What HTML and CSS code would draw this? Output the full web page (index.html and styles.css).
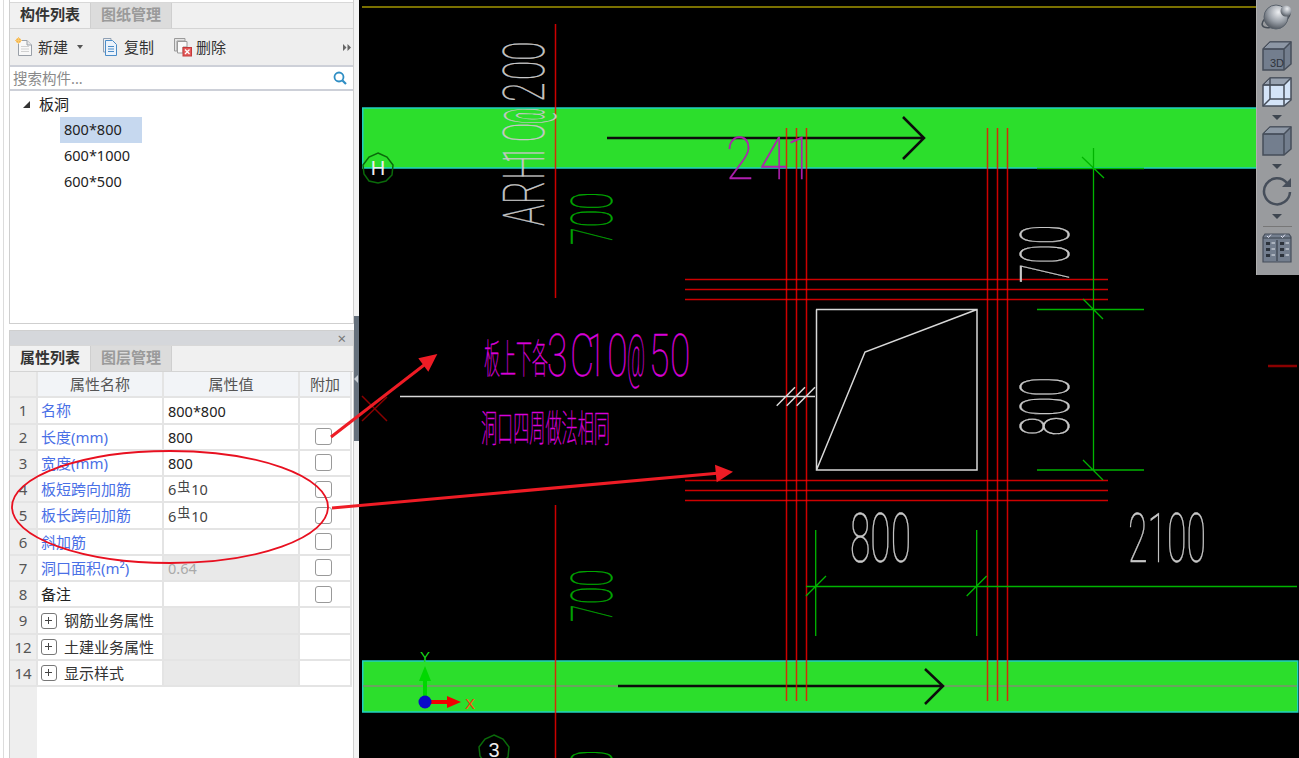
FILE: index.html
```html
<!DOCTYPE html>
<html lang="zh-CN">
<head>
<meta charset="utf-8">
<title>构件列表</title>
<link rel="stylesheet" href="styles.css">
</head>
<body>
<div class="sidebar">
  <div class="panels">
    <section class="panel panel-top">
      <div class="tabs">
        <div class="tab active">构件列表</div>
        <div class="tab">图纸管理</div>
      </div>
      <div class="tools">
        <div class="tool tool-new">
          <svg width="20" height="20" viewBox="0 0 20 20"><path d="M3.500 3.500H12L16.500 8V18.500H3.500Z" fill="#f8f8f8" stroke="#9aa0a8"/><path d="M12 3.500V8H16.500" fill="#e8e8e8" stroke="#9aa0a8"/><path d="M6 9.500H14M6 12H14M6 14.500H14" stroke="#d0d0d0"/><circle cx="3.500" cy="3.500" r="2.500" fill="#f5b342"/><path d="M3.500 0V7M0 3.500H7" stroke="#f9c870"/></svg>
          <span>新建</span><i class="caret"></i>
        </div>
        <div class="tool tool-copy">
          <svg width="16" height="20" viewBox="0 0 16 20"><path d="M1.500 1.500H9V3" fill="none" stroke="#8fa0b4"/><path d="M1.500 1.500V15H3" fill="none" stroke="#8fa0b4"/><path d="M3.500 3.500H10.500L14.500 7.500V18.500H3.500Z" fill="#eaf2fb" stroke="#4a8cc8"/><path d="M6 9.500H12M6 12H12M6 14.500H12" stroke="#4a8cc8"/></svg>
          <span>复制</span>
        </div>
        <div class="tool tool-del">
          <svg width="20" height="20" viewBox="0 0 20 20"><path d="M1.500 1.500H12V4H4V14H1.500Z" fill="#e4e4e4" stroke="#9a9a9a"/><path d="M4.500 4.500H14V10H10V16H4.500Z" fill="#fafafa" stroke="#9a9a9a"/><rect x="10" y="10.500" width="8.500" height="8.500" fill="#e45a5a" stroke="#c43a3a"/><path d="M12 12.500L16.500 17M16.500 12.500L12 17" stroke="#fff" stroke-width="1.300"/></svg>
          <span>删除</span>
        </div>
        <svg class="more" width="8" height="7" viewBox="0 0 8 7"><path d="M0 0L3.500 3.500L0 7ZM4.500 0L8 3.500L4.500 7Z" fill="#666"/></svg>
      </div>
      <div class="search">
        <span class="search-text">搜索构件...</span>
        <svg width="14" height="14" viewBox="0 0 14 14"><circle cx="6" cy="6" r="4.500" fill="none" stroke="#2f8ec4" stroke-width="1.800"/><path d="M9.500 9.500L13 13" stroke="#2f8ec4" stroke-width="2.200"/></svg>
      </div>
      <div class="tree">
        <div class="tree-root"><i class="tree-arrow"></i><span>板洞</span></div>
        <div class="tree-item selected">800*800</div>
        <div class="tree-item">600*1000</div>
        <div class="tree-item">600*500</div>
      </div>
    </section>

    <section class="panel panel-bottom">
      <div class="panel-head"><span class="close">×</span></div>
      <div class="tabs">
        <div class="tab active">属性列表</div>
        <div class="tab">图层管理</div>
      </div>
      <div class="grid">
        <div class="c idx"></div><div class="c hd">属性名称</div><div class="c hd">属性值</div><div class="c hd">附加</div>

        <div class="c idx">1</div><div class="c name">名称</div><div class="c val">800*800</div><div class="c chk"></div>
        <div class="c idx">2</div><div class="c name">长度(mm)</div><div class="c val">800</div><div class="c chk"><i class="box"></i></div>
        <div class="c idx">3</div><div class="c name">宽度(mm)</div><div class="c val">800</div><div class="c chk"><i class="box"></i></div>
        <div class="c idx">4</div><div class="c name">板短跨向加筋</div><div class="c val rebar">6<span class="bar">虫</span>10</div><div class="c chk"><i class="box"></i></div>
        <div class="c idx">5</div><div class="c name">板长跨向加筋</div><div class="c val rebar">6<span class="bar">虫</span>10</div><div class="c chk"><i class="box"></i></div>
        <div class="c idx">6</div><div class="c name">斜加筋</div><div class="c val"></div><div class="c chk"><i class="box"></i></div>
        <div class="c idx">7</div><div class="c name">洞口面积(m²)</div><div class="c val off">0.64</div><div class="c chk"><i class="box"></i></div>
        <div class="c idx">8</div><div class="c plain">备注</div><div class="c val"></div><div class="c chk"><i class="box"></i></div>
        <div class="c idx">9</div><div class="c group"><i class="plus"></i>钢筋业务属性</div><div class="c val off"></div><div class="c chk"></div>
        <div class="c idx">12</div><div class="c group"><i class="plus"></i>土建业务属性</div><div class="c val off"></div><div class="c chk"></div>
        <div class="c idx">14</div><div class="c group"><i class="plus"></i>显示样式</div><div class="c val off"></div><div class="c chk"></div>
      </div>
      <div class="grid-rest"></div>
    </section>
  </div>
  <div class="splitter"><div class="splitter-bar"><i></i></div></div>
</div>

<main class="canvas">
  <svg class="drawing" viewBox="359 0 940 758" width="940" height="758">
    <path class="olive" d="M362 7H1299"/>

    <rect class="band" x="362.750" y="108" width="937" height="60"/>
    <rect class="band" x="362.750" y="661" width="935" height="51"/>
    <path class="axis-line" d="M363 686H1297"/>

    <path class="beam-arrow" d="M607 138H924M903 117L924 138L903 159"/>
    <path class="beam-arrow" d="M618 686H943M925 669L943 686L925 704"/>

    <path class="red" d="M555.500 24V298M555.500 505V758"/>
    <path class="red" d="M786.500 128V701M796.500 128V701M806.500 128V701M987.500 128V701M997.500 128V701M1007.500 128V701"/>
    <path class="red" d="M685 279.500H1108M685 289.500H1108M685 299.500H1108M685 480.500H1108M685 490.500H1108M685 500.500H1108"/>
    <path class="dark-red" d="M1268 366H1297"/>
    <path class="dark-red thin" d="M362 396L387 421M387 397L362 421"/>

    <path class="white" d="M816 309.500H977V470H816.500V309.500M816.500 470L865 352L977 309.500"/>
    <path class="white" d="M400 396.500H815M776.700 405.700L795 387.300M786.700 405.700L805 387.300M796.700 405.700L815 387.300"/>

    <path class="dim" d="M1093.500 148V470M1037 168.500H1144M1037 309.500H1144M1037 470H1144M1082 157L1104 178M1083 299L1103 319M1083 460L1103 480"/>
    <path class="dim" d="M806 586.500H1297M815.700 530V636M976.700 530V636M806 596L826 576M966.700 596L986.700 576"/>

    <text class="cad grey" transform="translate(544 226) rotate(-90) scale(0.620 1)" font-size="58" x="0 35 74 100 135">ARH10</text>
    <text class="cad grey" transform="translate(544 124) rotate(-90)" font-size="58" textLength="16" lengthAdjust="spacingAndGlyphs">@</text>
    <text class="cad grey" transform="translate(544 102) rotate(-90) scale(0.620 1)" font-size="58" x="0 35 66">200</text>
    <text class="cad green" transform="translate(612 245) rotate(-90)" font-size="58" textLength="53" lengthAdjust="spacingAndGlyphs">700</text>
    <text class="cad green" transform="translate(612 622) rotate(-90)" font-size="58" textLength="53" lengthAdjust="spacingAndGlyphs">700</text>
    <text class="cad green" transform="translate(612 803) rotate(-90)" font-size="58" textLength="53" lengthAdjust="spacingAndGlyphs">700</text>
    <text class="cad grey" transform="translate(1069 283) rotate(-90)" font-size="69" textLength="58" lengthAdjust="spacingAndGlyphs">700</text>
    <text class="cad grey" transform="translate(1069 436) rotate(-90)" font-size="69" textLength="59" lengthAdjust="spacingAndGlyphs">800</text>
    <text class="cad grey" x="850" y="562" font-size="69" textLength="61" lengthAdjust="spacingAndGlyphs">800</text>
    <text class="cad grey" x="1128" y="562" font-size="69" textLength="78" lengthAdjust="spacingAndGlyphs">2100</text>
    <text class="cad plum" transform="translate(726 179) scale(0.850 1)" font-size="59" x="0 39 71">241</text>
    <text class="cad-cjk magenta" x="484" y="373" font-size="40" textLength="64" lengthAdjust="spacingAndGlyphs">板上下各</text>
    <text class="cad magenta" transform="translate(547 376) scale(0.620 1)" font-size="60" x="0 37 63 97">3C10</text>
    <text class="cad magenta" x="627" y="376" font-size="60" textLength="18" lengthAdjust="spacingAndGlyphs">@</text>
    <text class="cad magenta" transform="translate(649 376) scale(0.620 1)" font-size="60" x="0 34">50</text>
    <text class="cad-cjk magenta" x="481" y="442" font-size="37" textLength="129" lengthAdjust="spacingAndGlyphs">洞口四周做法相同</text>

    <polygon class="marker" points="378,153 387,157 393,165 392,175 386,181 378,183 369,181 364,174 363,165 369,157"/>
    <text class="marker-label" x="378" y="175" font-size="20">H</text>
    <polygon class="marker" points="494,735 503,739 509,747 508,757 502,763 494,765 485,763 480,756 479,747 485,739"/>
    <text class="marker-label" x="494" y="757" font-size="20">3</text>

    <path class="axis-y" d="M425 702V680"/><path class="axis-y-head" d="M425 666L431 681H419Z"/>
    <path class="axis-x" d="M425 702H449"/><path class="axis-x-head" d="M461 702L447 696V708Z"/>
    <circle class="axis-o" cx="425" cy="702" r="6.500"/>
    <text class="axis-label-y" x="425" y="662" font-size="15">Y</text>
    <text class="axis-label-x" x="470" y="709" font-size="15">X</text>
  </svg>

  <nav class="view-tools">
    <svg class="vt-orbit" width="32" height="30" viewBox="0 0 32 30"><defs><radialGradient id="ball" cx="0.600" cy="0.300" r="0.750"><stop offset="0" stop-color="#eceef1"/><stop offset="0.550" stop-color="#9aa0a8"/><stop offset="1" stop-color="#4a5058"/></radialGradient></defs><ellipse cx="15" cy="17" rx="15" ry="6.500" transform="rotate(-25 15 17)" fill="none" stroke="#454c55" stroke-width="1.500"/><circle cx="15" cy="15" r="12" fill="url(#ball)" stroke="#5a626c"/><circle cx="25" cy="9" r="5.500" fill="url(#ball)"/></svg>
    <svg class="vt-box" width="30" height="30" viewBox="0 0 30 30"><path d="M1 8L8 1H29V23L22 29H1Z" fill="#737e8e" stroke="#464e5a" stroke-width="1.500"/><path d="M1 8L8 1H29L22 8Z" fill="#8d97a5" stroke="#464e5a"/><path d="M1 8H22V29M22 8L29 1" fill="none" stroke="#464e5a" stroke-width="1.500"/><text class="vt-3d" x="8" y="26" font-size="11">3D</text></svg>
    <svg class="vt-wire" width="30" height="30" viewBox="0 0 30 30"><path d="M1 8L8 1H29V23L22 29H1Z" fill="#d4e4f8" stroke="#464e5a" stroke-width="1.500"/><path d="M1 8L8 1H29L22 8Z" fill="#98a2b0" stroke="#464e5a"/><path d="M1 8H22V29M22 8L29 1M8 1V22H29M8 22L1 29" fill="none" stroke="#464e5a" stroke-width="1.500"/></svg>
    <svg class="vt-caret" width="10" height="5" viewBox="0 0 10 5"><path d="M0 0H10L5 5Z" fill="#3e4650"/></svg>
    <svg class="vt-solid" width="30" height="30" viewBox="0 0 30 30"><path d="M1 8L8 1H29V23L22 29H1Z" fill="#737e8e" stroke="#464e5a" stroke-width="1.500"/><path d="M1 8L8 1H29L22 8Z" fill="#8d97a5" stroke="#464e5a"/><path d="M1 8H22V29M22 8L29 1" fill="none" stroke="#464e5a" stroke-width="1.500"/></svg>
    <svg class="vt-caret" width="10" height="5" viewBox="0 0 10 5"><path d="M0 0H10L5 5Z" fill="#3e4650"/></svg>
    <svg class="vt-rotate" width="30" height="30" viewBox="0 0 30 30"><path d="M25 7A13 13 0 1 0 28 16" fill="none" stroke="#464e5a" stroke-width="2.500"/><path d="M29 2V11H20Z" fill="#464e5a"/></svg>
    <svg class="vt-caret" width="10" height="5" viewBox="0 0 10 5"><path d="M0 0H10L5 5Z" fill="#3e4650"/></svg>
    <div class="vt-sep"></div>
    <svg class="vt-grid" width="30" height="30" viewBox="0 0 30 30"><path d="M1 4L3 1H27L29 4V29H1Z" fill="#737e8e" stroke="#464e5a" stroke-width="1.200"/><path d="M1 5H29M15 7V28" stroke="#3a424c" stroke-width="1.200"/><path d="M5 3L6.500 4.500L9 1.500M19 3L20.500 4.500L23 1.500" fill="none" stroke="#eef" stroke-width="0.900"/><path d="M4 9H8V12H4ZM4 15H8V18H4ZM4 21H8V24H4ZM18 9H22V12H18ZM18 15H22V18H18ZM18 21H22V24H18Z" fill="#2c333c"/><path d="M9.500 10H13M9.500 16H13M9.500 22H13M23.500 10H27M23.500 16H27M23.500 22H27" stroke="#e4e8ee"/></svg>
  </nav>
</main>

<svg class="markup" viewBox="0 0 1299 758" width="1299" height="758">
  <ellipse class="mk-ring" cx="170" cy="507" rx="158" ry="56"/>
  <path class="mk-line" d="M331 437L428 362"/>
  <path class="mk-head" d="M437.300 354L418.300 358.300L428.300 371.700Z"/>
  <path class="mk-line" d="M332 508L720 473"/>
  <path class="mk-head" d="M733 471.700L715 464.700L716.700 482.300Z"/>
</svg>
</body>
</html>
```
FILE: styles.css
```css
* { box-sizing: border-box; }
html, body { margin: 0; height: 758px; overflow: hidden; }
body {
  position: relative;
  display: flex;
  width: 1299px;
  background: #fff;
  color: #222;
  font: 15px/1 "Noto Sans", "Noto Sans CJK SC", sans-serif;
}
i { display: block; font-style: normal; }

.sidebar {
  display: flex;
  flex: 0 0 359px;
  height: 758px;
  padding-left: 9px;
  background: linear-gradient(90deg, #fff 3px, #dcdcdc 3px, #dcdcdc 4px, #fff 4px);
}
.panels { display: flex; flex-direction: column; gap: 6px; width: 345px; background: #fff; }
.panel { display: flex; flex-direction: column; border: 1px solid #cfcfcf; background: #fff; }
.panel-top { flex: 0 0 324px; padding-top: 2px; border-top: 0; background: #fff; }
.panel-bottom { flex: 1; border-bottom: 0; }

.tabs { display: flex; flex: 0 0 27px; background: #f0f0f0; border-top: 1px solid #d8d8d8; border-bottom: 1px solid #d4d4d4; }
.tab {
  width: 81px;
  padding-top: 4px;
  text-align: center;
  background: #dcdcdc;
  color: #9a9a9a;
  font-weight: 700;
  font-size: 15px;
  border-right: 1px solid #cfcfcf;
}
.tab.active { background: #f1f1f1; color: #333; }

.tools { display: flex; align-items: center; flex: 0 0 38px; position: relative; padding-left: 5px; background: #eeeeee; border-bottom: 2px solid #cdd0d8; color: #333; }
.tool { display: flex; align-items: center; gap: 3px; }
.tool-new { width: 87px; }
.tool-copy { width: 71px; gap: 6px; }
.tool-del { gap: 3px; }
.caret { width: 0; height: 0; margin-left: 6px; border: 3px solid transparent; border-top: 4px solid #555; border-bottom: 0; }
.more { margin-left: auto; margin-right: 2px; }

.search { display: flex; align-items: center; justify-content: space-between; flex: 0 0 24px; padding: 0 6px 0 3px; background: #fff; border-bottom: 2px solid #cdd0d8; }
.search-text { color: #8a8a8a; font-size: 14.500px; }

.tree { flex: 1; }
.tree-root { display: flex; align-items: center; height: 26px; padding-left: 13px; }
.tree-arrow { width: 0; height: 0; margin-right: 9px; border-style: solid; border-width: 0 0 7px 7px; border-color: transparent transparent #333 transparent; }
.tree-item { width: 82px; height: 26px; margin-left: 50px; padding-left: 4px; line-height: 25px; font-size: 14.500px; color: #222; }
.tree-item.selected { background: #c6d8ef; }

.panel-head { display: flex; justify-content: flex-end; flex: 0 0 14px; padding-right: 7px; background: #d5d7db; }
.close { color: #777; font-size: 15px; line-height: 14px; }

.grid { display: grid; grid-template-columns: 28px 126px 136px 52px; grid-auto-rows: 26.250px; flex: 0 0 auto; }
.c { display: flex; align-items: center; padding-top: 1px; padding-left: 3px; border-right: 2px solid #e4e4e4; border-bottom: 2px solid #e4e4e4; background: #fff; white-space: nowrap; }
.idx { justify-content: center; padding-left: 0; background: #eeeeee; color: #555; font-size: 15px; }
.hd { justify-content: center; padding-left: 0; background: #f2f4f7; color: #555; }
.name { color: #4a70e6; }
.plain { color: #222; }
.val { padding-left: 4px; font-size: 14.500px; color: #222; }
.rebar { color: #444; }
.bar { position: relative; top: -3px; margin: 0 1px; font-size: 13px; }
.off { background: #e9e9e9; color: #aaa; }
.chk { justify-content: center; padding: 0 4px 0 0; }
.box { width: 17px; height: 17px; border: 1.500px solid #999; border-radius: 3px; background: #fff; }
.group { color: #333; }
.plus { position: relative; width: 16px; height: 16px; margin: 0 7px 0 0; border: 1.500px solid #777; border-radius: 3px; }
.plus::before, .plus::after { content: ""; position: absolute; background: #444; }
.plus::before { left: 3px; top: 6px; width: 7px; height: 1px; }
.plus::after { left: 6px; top: 3px; width: 1px; height: 7px; }
.grid-rest { flex: 1; background: linear-gradient(90deg, #eeeeee 27px, #fff 27px); }

.splitter { flex: 0 0 5px; background: #f3f3f3; }
.splitter-bar { display: flex; align-items: center; height: 125px; margin-top: 316px; background: #66717d; }
.splitter-bar i { width: 0; height: 0; border: 4px solid transparent; border-left: 0; border-right: 4px solid #c8ced4; }

.canvas { position: relative; flex: 1; height: 758px; background: #000; overflow: hidden; }
.drawing { display: block; }
.olive { stroke: #7a7000; stroke-width: 2; fill: none; }
.band { fill: #2cde2c; stroke: #1fd0c0; stroke-width: 1.500; }
.axis-line { stroke: #7f8f70; stroke-width: 1.500; }
.beam-arrow { fill: none; stroke: #0c0c0c; stroke-width: 2.500; }
.red { fill: none; stroke: #ff0000; stroke-width: 1.500; opacity: 0.800; }
.dark-red { fill: none; stroke: #8a0000; stroke-width: 2.500; }
.dark-red.thin { stroke-width: 1.500; }
.white { fill: none; stroke: #d8d8d8; stroke-width: 1.500; }
.dim { fill: none; stroke: #00b400; stroke-width: 1.300; }
.cad { font-family: Roboto, "Liberation Sans", sans-serif; font-weight: 100; stroke-width: 0.400; }
.cad-cjk { font-family: "Noto Sans CJK SC", sans-serif; font-weight: 100; stroke-width: 0.500; }
.grey { fill: #c8c8c8; stroke: #c8c8c8; }
.green { fill: #00a800; stroke: #00a800; }
.plum { fill: #b020b0; stroke: #b020b0; }
.magenta { fill: #d800d8; stroke: #d800d8; }
.marker { fill: none; stroke: #0a6a0a; stroke-width: 1.500; }
.marker-label { fill: #eee; text-anchor: middle; font-family: "Liberation Sans", sans-serif; }
.axis-y { stroke: #00d800; stroke-width: 4; }
.axis-y-head { fill: #00d800; }
.axis-x { stroke: #f00000; stroke-width: 4; }
.axis-x-head { fill: #f00000; }
.axis-o { fill: #0a0ac8; }
.axis-label-y { fill: #18d818; text-anchor: middle; font-family: "Liberation Sans", sans-serif; }
.axis-label-x { fill: #ff3a10; text-anchor: middle; font-family: "Liberation Sans", sans-serif; }

.view-tools { position: absolute; top: 0; right: 0; width: 43px; height: 275px; display: flex; flex-direction: column; align-items: center; padding-right: 2px; background: #999b9e; border-left: 1px solid #b0b0b0; }
.view-tools svg { display: block; flex: none; }
.vt-orbit { margin-top: 2px; }
.vt-box { margin-top: 9px; }
.vt-wire { margin-top: 6px; }
.vt-caret { margin-top: 8px; }
.vt-solid { margin-top: 6px; }
.vt-rotate { margin-top: 7px; }
.vt-sep { flex: none; width: 29px; height: 1px; margin-top: 7px; background: #777; }
.vt-grid { margin-top: 6px; }
.vt-3d { fill: #2e343c; font-family: "Liberation Sans", sans-serif; }

.markup { position: absolute; left: 0; top: 0; pointer-events: none; }
.mk-ring { fill: none; stroke: #e81020; stroke-width: 1.800; }
.mk-line { fill: none; stroke: #ee1c25; stroke-width: 3; }
.mk-head { fill: #ee1c25; }
```
